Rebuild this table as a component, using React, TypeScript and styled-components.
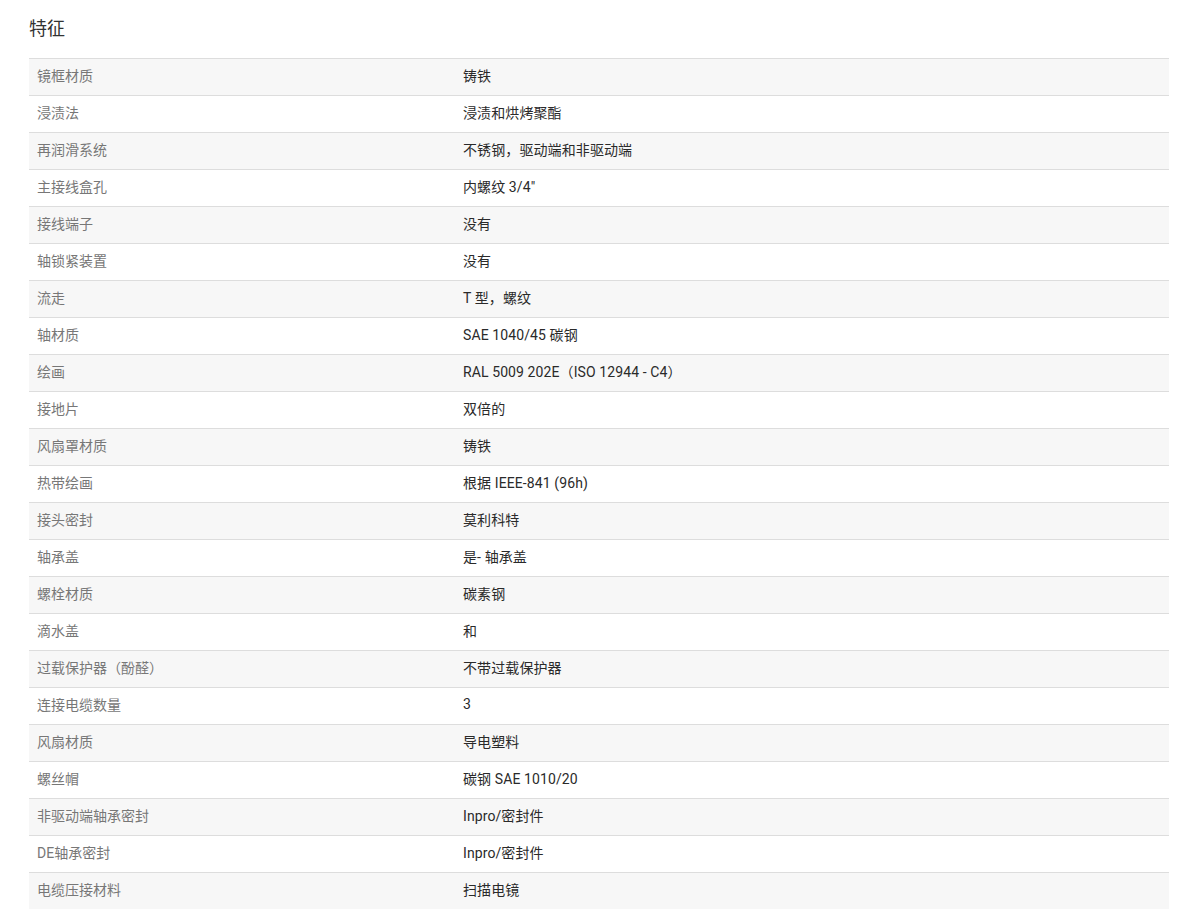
import React from 'react';
import styled, { createGlobalStyle } from 'styled-components';

const GlobalStyle = createGlobalStyle`
    body {
        margin : 0;
        background : #ffffff;
        font-family : Roboto, "Noto Sans CJK SC", sans-serif;
    }
`

const specs: [string, string][] = [
    ['镜框材质', '铸铁'],
    ['浸渍法', '浸渍和烘烤聚酯'],
    ['再润滑系统', '不锈钢，驱动端和非驱动端'],
    ['主接线盒孔', '内螺纹 3/4"'],
    ['接线端子', '没有'],
    ['轴锁紧装置', '没有'],
    ['流走', 'T 型，螺纹'],
    ['轴材质', 'SAE 1040/45 碳钢'],
    ['绘画', 'RAL 5009 202E（ISO 12944 - C4）'],
    ['接地片', '双倍的'],
    ['风扇罩材质', '铸铁'],
    ['热带绘画', '根据 IEEE-841 (96h)'],
    ['接头密封', '莫利科特'],
    ['轴承盖', '是- 轴承盖'],
    ['螺栓材质', '碳素钢'],
    ['滴水盖', '和'],
    ['过载保护器（酚醛）', '不带过载保护器'],
    ['连接电缆数量', '3'],
    ['风扇材质', '导电塑料'],
    ['螺丝帽', '碳钢 SAE 1010/20'],
    ['非驱动端轴承密封', 'Inpro/密封件'],
    ['DE轴承密封', 'Inpro/密封件'],
    ['电缆压接材料', '扫描电镜'],
];

const App: React.FC = () => {
    return (
        <Page>
            <GlobalStyle />
            <Title>特征</Title>
            <SpecTable>
                <tbody>
                    {specs.map(([label, value], i) => (
                        <SpecRow key={label} striped={i % 2 === 0}>
                            <LabelCell>{label}</LabelCell>
                            <ValueCell>{value}</ValueCell>
                        </SpecRow>
                    ))}
                </tbody>
            </SpecTable>
        </Page>
    );
};

export default App;

const Page = styled.div`
    padding : 18px 31px 0 29px;
`

const Title = styled.h2`
    margin : 0 0 18px;
    font-size : 18px;
    font-weight : 400;
    line-height : 22px;
    color : #333333;
`

const SpecTable = styled.table`
    width : 1140px;
    border-collapse : collapse;
    border-top : 1px solid #dddddd;
`

const SpecRow = styled.tr<{ striped: boolean }>`
    background : ${({ striped }) => (striped ? '#f7f7f7' : '#ffffff')};
    border-bottom : 1px solid #dddddd;

    &:last-child {
        border-bottom : none;
    }
`

const LabelCell = styled.td`
    width : 410px;
    height : 32px;
    padding : 0 8px 4px;
    font-size : 14px;
    color : #777777;
    vertical-align : middle;
`

const ValueCell = styled.td`
    height : 32px;
    padding : 0 8px 4px;
    font-size : 14px;
    font-weight : 400;
    color : #2a2a2a;
    letter-spacing : 0.1px;
    vertical-align : middle;
`
